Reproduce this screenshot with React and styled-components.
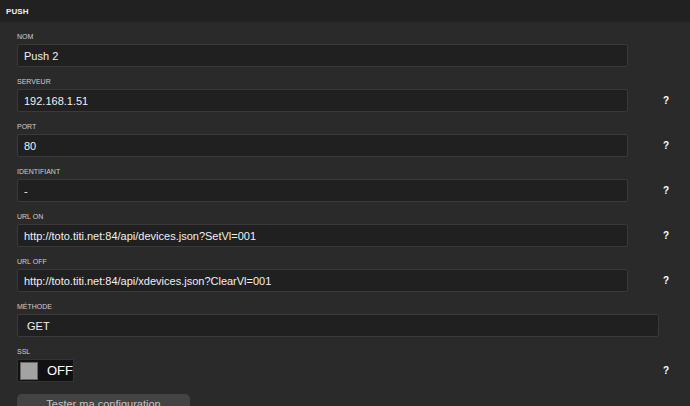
import React from 'react';
import styled, { createGlobalStyle } from 'styled-components';

const GlobalStyle = createGlobalStyle`
  html, body {
    margin: 0;
    padding: 0;
    background: #2a2a2a;
    overflow: hidden;
  }
  body {
    font-family: "Liberation Sans", Arial, sans-serif;
  }
`;

const Panel = styled.div`
  width: 690px;
  height: 406px;
  background: #2a2a2a;
  overflow: hidden;
`;

const Header = styled.div`
  height: 22px;
  background: #212121;
  display: flex;
  align-items: center;
  padding-left: 6px;
  color: #f2f2f2;
  font-size: 8px;
  font-weight: bold;
  letter-spacing: 0.1px;
`;

const Body = styled.div`
  padding: 9px 0 0 17px;
`;

const Row = styled.div`
  display: flex;
  align-items: flex-end;
  margin-bottom: ${(p) => (p.$tight ? 12 : 9)}px;
`;

const Field = styled.div`
  width: 642px;
  display: flex;
  flex-direction: column;
`;

const Label = styled.div`
  height: 13px;
  line-height: 12px;
  font-size: 7px;
  color: #cfcfcf;
  text-transform: uppercase;
`;

const Input = styled.div`
  box-sizing: border-box;
  width: ${(p) => p.$width || 611}px;
  height: 23px;
  background: #202020;
  border: 1px solid #3a3a3a;
  border-radius: 2px;
  display: flex;
  align-items: center;
  padding-left: ${(p) => (p.$select ? 9 : 6)}px;
  color: #f0f0f0;
  font-size: 11px;
`;

const Help = styled.div`
  width: 12px;
  height: 23px;
  display: flex;
  align-items: center;
  justify-content: center;
  margin-left: 1px;
  color: #ffffff;
  font-size: 10px;
  font-weight: bold;
  visibility: ${(p) => (p.$hidden ? 'hidden' : 'visible')};
`;

const Toggle = styled.div`
  box-sizing: border-box;
  width: 57px;
  height: 23px;
  background: #111111;
  border: 1px solid #333333;
  display: flex;
  align-items: center;
  padding-left: 2px;
  gap: 9px;
`;

const Knob = styled.div`
  width: 16px;
  height: 16px;
  background: #a3a3a3;
  border: 1px solid #666;
`;

const ToggleText = styled.span`
  color: #ffffff;
  font-size: 13px;
`;

const TestButton = styled.div`
  width: 173px;
  height: 24px;
  background: #434343;
  border-radius: 5px;
  color: #c4c4c4;
  font-size: 11px;
  display: flex;
  justify-content: center;
  padding-top: 4px;
  box-sizing: border-box;
`;

const fields = [
  { label: 'Nom', value: 'Push 2', noHelp: true },
  { label: 'Serveur', value: '192.168.1.51' },
  { label: 'Port', value: '80' },
  { label: 'Identifiant', value: '-' },
  { label: 'URL On', value: 'http://toto.titi.net:84/api/devices.json?SetVl=001' },
  { label: 'URL Off', value: 'http://toto.titi.net:84/api/xdevices.json?ClearVl=001' },
];

export default function App() {
  return (
    <Panel>
      <GlobalStyle />
      <Header>PUSH</Header>
      <Body>
        {fields.map((f) => (
          <Row key={f.label}>
            <Field>
              <Label>{f.label}</Label>
              <Input>{f.value}</Input>
            </Field>
            <Help $hidden={f.noHelp}>?</Help>
          </Row>
        ))}
        <Row>
          <Field>
            <Label>Méthode</Label>
            <Input $width={642} $select>GET</Input>
          </Field>
          <Help $hidden>?</Help>
        </Row>
        <Row $tight>
          <Field>
            <Label>SSL</Label>
            <Toggle>
              <Knob />
              <ToggleText>OFF</ToggleText>
            </Toggle>
          </Field>
          <Help>?</Help>
        </Row>
        <TestButton>Tester ma configuration</TestButton>
      </Body>
    </Panel>
  );
}
